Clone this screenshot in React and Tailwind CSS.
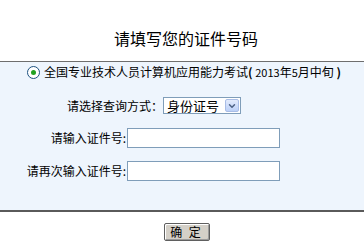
import { ChevronDown } from "lucide-react"

function Radio() {
    return (
        <span className="w-[13px] h-[13px] rounded-full border border-[#1c5180] bg-white flex items-center justify-center shrink-0">
            <span className="w-[5px] h-[5px] rounded-full bg-[#21a121]"></span>
        </span>
    )
}

function Field({ label, labelWidth }) {
    return (
        <div className="flex items-center h-[20px]">
            <div className={`${labelWidth} text-right text-[12px] text-black pr-[1px]`}>{label}</div>
            <div className="w-[153px] h-[20px] border border-[#7f9db9] bg-white"></div>
        </div>
    )
}

export default function App() {
    return (
        <div className="w-[364px] h-[252px] bg-white overflow-hidden" style={{ fontFamily: '"Noto Sans CJK SC", sans-serif' }}>
            <div className="h-[61px] flex items-end justify-center pl-[8px] pb-[13px]">
                <h1 className="text-[16px] leading-[20px] text-black">请填写您的证件号码</h1>
            </div>

            <div className="border-t border-t-[#6e6e6e] border-b-2 border-b-[#5a5a5a] bg-[#eef5fd] pt-[2px] pb-[29px]">
                <div className="flex items-center h-[16px] pl-[27px] text-[12px] text-black leading-none">
                    <Radio />
                    <span className="ml-[4px] whitespace-nowrap">全国专业技术人员计算机应用能力考试<span className="font-bold">(</span> <span className="text-[11px]">2013</span>年<span className="text-[11px]">5</span>月中旬 <span className="font-bold">)</span></span>
                </div>

                <div className="flex items-center h-[17px] mt-[17px]">
                    <div className="w-[163px] text-right text-[12px] text-black">请选择查询方式：</div>
                    <div className="w-[78px] h-[17px] border border-[#7f9db9] bg-white flex items-center justify-between pl-[3px] pr-[1px]">
                        <span className="text-[13px] leading-none text-black">身份证号</span>
                        <span className="w-[14px] h-[13px] border border-[#a9bde6] rounded-[2px] bg-gradient-to-b from-[#e3ebfc] to-[#bcd0f7] flex items-center justify-center">
                            <ChevronDown className="w-[10px] h-[10px] text-[#4d6185]" strokeWidth={3.5} />
                        </span>
                    </div>
                </div>

                <div className="mt-[14px]">
                    <Field label="请输入证件号:" labelWidth="w-[127px]" />
                </div>
                <div className="mt-[13px]">
                    <Field label="请再次输入证件号:" labelWidth="w-[127px]" />
                </div>
            </div>

            <div className="flex justify-center pl-[9px] mt-[11px]">
                <button className="w-[46px] h-[18px] rounded-[2px] bg-[#d4d0c8] border border-[#5f5f5f] shadow-[inset_1px_1px_0_#ffffff,inset_-1px_-1px_0_#9a9a9a] text-[12px] leading-none text-black flex items-center justify-center tracking-[2px]">
                    确 定
                </button>
            </div>
        </div>
    )
}
